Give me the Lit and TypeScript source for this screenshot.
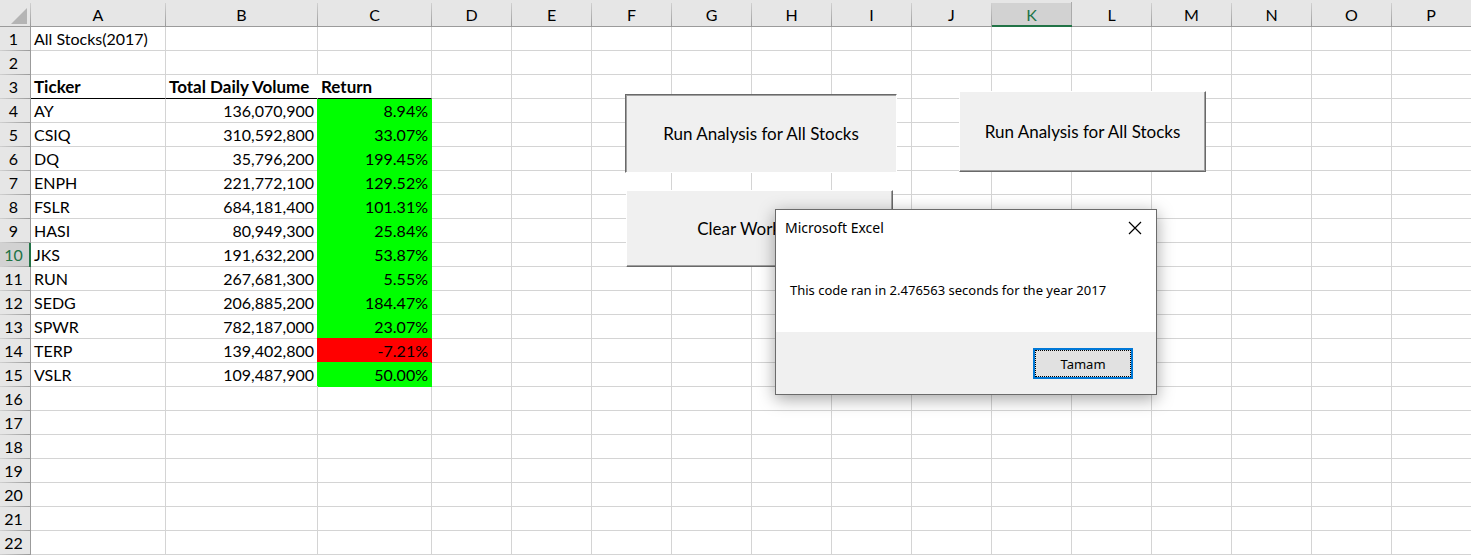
import { LitElement, html, css } from "lit";
import { customElement, property } from "lit/decorators.js";
import { classMap } from "lit/directives/class-map.js";

interface Stock {
  ticker: string;
  volume: string;
  change: string;
}

const STOCKS: Stock[] = [
  { ticker: "AY", volume: "136,070,900", change: "8.94%" },
  { ticker: "CSIQ", volume: "310,592,800", change: "33.07%" },
  { ticker: "DQ", volume: "35,796,200", change: "199.45%" },
  { ticker: "ENPH", volume: "221,772,100", change: "129.52%" },
  { ticker: "FSLR", volume: "684,181,400", change: "101.31%" },
  { ticker: "HASI", volume: "80,949,300", change: "25.84%" },
  { ticker: "JKS", volume: "191,632,200", change: "53.87%" },
  { ticker: "RUN", volume: "267,681,300", change: "5.55%" },
  { ticker: "SEDG", volume: "206,885,200", change: "184.47%" },
  { ticker: "SPWR", volume: "782,187,000", change: "23.07%" },
  { ticker: "TERP", volume: "139,402,800", change: "-7.21%" },
  { ticker: "VSLR", volume: "109,487,900", change: "50.00%" },
];

const COLUMNS = "ABCDEFGHIJKLMNOP".split("");
const ROW_COUNT = 22;
const HEADING_ROW = 3;
const ACTIVE_COLUMN = "K";
const ACTIVE_ROW = 10;

@customElement("sheet-grid")
export class SheetGrid extends LitElement {
  static styles = css`
    :host {
      display: block;
      overflow: hidden;
    }
    .grid {
      width: 100%;
      table-layout: fixed;
      border-collapse: separate;
      border-spacing: 0;
      font-size: 16px;
      line-height: 20px;
      color: #000;
    }
    .w-index { width: 31px; }
    .w-a { width: 135px; }
    .w-b { width: 152px; }
    .w-c { width: 114px; }
    .w-std { width: 80px; }
    th, td {
      box-sizing: border-box;
      padding: 0 3px;
      white-space: nowrap;
      font-weight: 400;
    }
    td {
      height: 24px;
      border-right: 1px solid #d4d4d4;
      border-bottom: 1px solid #d4d4d4;
      text-align: left;
    }
    td:last-child { border-right: 0; }
    .corner, .col-head {
      height: 27px;
      padding: 3px 4px 0 3px;
      border-bottom: 1px solid #9b9b9b;
      background:
        linear-gradient(#d0d0d0, #9b9b9b) right bottom / 1px 23px no-repeat,
        #e6e6e6;
      text-align: center;
    }
    .corner {
      padding: 4px 4px 0 0;
      text-align: right;
    }
    .corner svg {
      display: inline-block;
      vertical-align: top;
      margin-top: 3px;
    }
    .row-head {
      height: 24px;
      padding: 0 3px 0 0;
      border-right: 1px solid #9b9b9b;
      background:
        linear-gradient(to right, #d0d0d0, #9b9b9b) left bottom / 100% 1px no-repeat,
        #e6e6e6;
      text-align: center;
    }
    .col-head:last-child { background: #e6e6e6; }
    .col-head.active {
      padding-top: 4px;
      border-bottom: 2px solid #217346;
      background:
        linear-gradient(#ababab, #ababab) right bottom / 1px 23px no-repeat,
        linear-gradient(#d2d2d2, #d2d2d2) left bottom / 100% 22px no-repeat,
        #e6e6e6;
      color: #217346;
    }
    .row-head.active {
      padding-right: 2px;
      border-right: 2px solid #217346;
      background-color: #d2d2d2;
      color: #217346;
    }
    .heading {
      font-size: 17px;
      font-weight: 700;
      border-bottom-color: #000;
    }
    .heading.spill { border-right-color: #fff; }
    .number { text-align: right; }
    .gain, .loss { position: relative; }
    .gain {
      border-color: #0f0;
      background: #0f0;
      box-shadow: -1px -1px 0 #0f0;
    }
    .loss {
      border-color: #f00;
      background: #f00;
      box-shadow: -1px -1px 0 #f00;
    }
    .gain.first { box-shadow: -1px 0 0 #0f0; }
  `;

  @property({ attribute: false }) stocks: Stock[] = [];

  private renderCell(row: number, column: string) {
    if (row === 1 && column === "A") return html`<td>All Stocks(2017)</td>`;
    if (row === HEADING_ROW) {
      if (column === "A") return html`<td class="heading">Ticker</td>`;
      if (column === "B") return html`<td class="heading spill">Total Daily Volume</td>`;
      if (column === "C") return html`<td class="heading">Return</td>`;
    }
    const stock = this.stocks[row - HEADING_ROW - 1];
    if (stock) {
      if (column === "A") return html`<td>${stock.ticker}</td>`;
      if (column === "B") return html`<td class="number">${stock.volume}</td>`;
      if (column === "C") {
        const loss = stock.change.startsWith("-");
        return html`<td class=${classMap({
          number: true,
          gain: !loss,
          loss,
          first: row === HEADING_ROW + 1,
        })}>${stock.change}</td>`;
      }
    }
    return html`<td></td>`;
  }

  render() {
    const rows = Array.from({ length: ROW_COUNT }, (_, i) => i + 1);
    return html`
      <table class="grid">
        <colgroup>
          <col class="w-index" /><col class="w-a" /><col class="w-b" /><col class="w-c" />
          ${COLUMNS.slice(3, -1).map(() => html`<col class="w-std" />`)}
          <col />
        </colgroup>
        <thead>
          <tr>
            <th class="corner" aria-label="Select all">
              <svg width="16" height="16" viewBox="0 0 16 16" aria-hidden="true">
                <path d="M16 0V16H0Z" fill="#b4b4b4" />
              </svg>
            </th>
            ${COLUMNS.map((c) => html`<th scope="col" class=${classMap({
              "col-head": true,
              active: c === ACTIVE_COLUMN,
            })}>${c}</th>`)}
          </tr>
        </thead>
        <tbody>
          ${rows.map((r) => html`<tr>
            <th scope="row" class=${classMap({ "row-head": true, active: r === ACTIVE_ROW })}>${r}</th>
            ${COLUMNS.map((c) => this.renderCell(r, c))}
          </tr>`)}
        </tbody>
      </table>
    `;
  }
}

@customElement("message-box")
export class MessageBox extends LitElement {
  static styles = css`
    :host {
      display: flex;
      flex-direction: column;
      box-sizing: border-box;
      border: 1px solid #6b6b6b;
      background: #fff;
      color: #000;
      font-family: "Noto Sans", "Open Sans", sans-serif;
      box-shadow: 0 4px 16px rgba(0, 0, 0, 0.36);
    }
    .title-bar {
      display: flex;
      align-items: center;
      justify-content: space-between;
      height: 36px;
      padding: 0 14px 0 9px;
    }
    .title {
      margin: 0;
      font-size: 14px;
      line-height: 20px;
      font-weight: 400;
    }
    .close {
      display: flex;
      padding: 0;
      border: 0;
      background: none;
    }
    .message {
      flex: 1;
      margin: 0;
      padding: 34px 14px 0;
      font-size: 13px;
      line-height: 20px;
      white-space: nowrap;
    }
    .actions {
      display: flex;
      justify-content: flex-end;
      padding: 16px 23px 15px;
      background: #f0f0f0;
    }
    .confirm {
      box-sizing: border-box;
      width: 100px;
      height: 31px;
      padding: 0;
      border: 2px solid #0078d7;
      outline: 1px dotted #000;
      outline-offset: -3px;
      background: #e1e1e1;
      color: #000;
      font-family: inherit;
      font-size: 13px;
      line-height: 20px;
    }
  `;

  render() {
    return html`
      <header class="title-bar">
        <h2 class="title">Microsoft Excel</h2>
        <button class="close" aria-label="Close">
          <svg width="14" height="14" viewBox="0 0 14 14" aria-hidden="true">
            <path d="M1 1L13 13M13 1L1 13" stroke="#000" stroke-width="1.2" fill="none" />
          </svg>
        </button>
      </header>
      <p class="message">This code ran in 2.476563 seconds for the year 2017</p>
      <footer class="actions"><button class="confirm">Tamam</button></footer>
    `;
  }
}

@customElement("app-root")
export class AppRoot extends LitElement {
  static styles = css`
    :host {
      display: block;
      position: relative;
      min-height: 100vh;
      padding-right: 4px;
      box-sizing: border-box;
      background: #fff;
      font-family: Lato, "Open Sans", sans-serif;
    }
    .macro {
      position: absolute;
      box-sizing: border-box;
      padding: 0;
      border: 1px solid;
      border-color: #fff #696969 #696969 #fff;
      box-shadow: inset -1px -1px 0 #a0a0a0;
      background: #f0f0f0;
      color: #000;
      font-family: inherit;
      font-size: 17px;
      line-height: 20px;
    }
    .macro.pressed {
      border-color: #696969 #fff #fff #696969;
      box-shadow: inset 1px 1px 0 #a0a0a0;
    }
    .run-left { left: 625px; top: 94px; width: 272px; height: 79px; }
    .run-right { left: 959px; top: 91px; width: 247px; height: 81px; }
    .clear { left: 626px; top: 190px; width: 267px; height: 77px; }
    .dialog { position: absolute; left: 775px; top: 209px; width: 382px; height: 186px; }
  `;

  render() {
    return html`
      <sheet-grid .stocks=${STOCKS}></sheet-grid>
      <button class="macro pressed run-left">Run Analysis for All Stocks</button>
      <button class="macro run-right">Run Analysis for All Stocks</button>
      <button class="macro clear">Clear Worksheet</button>
      <message-box class="dialog" role="dialog" aria-label="Microsoft Excel"></message-box>
    `;
  }
}
